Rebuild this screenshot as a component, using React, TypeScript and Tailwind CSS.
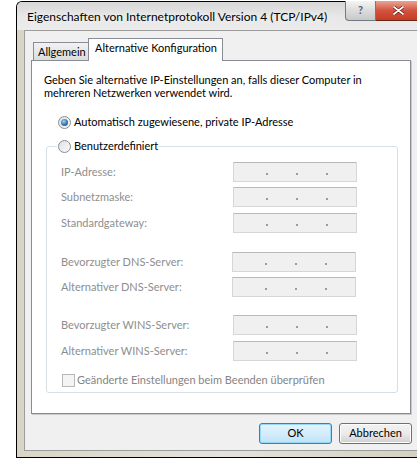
import React from 'react';

const font = { fontFamily: 'Lato, "Open Sans", sans-serif' };

type Field = { label: string; mt: string; shift?: boolean };

const fields: Field[] = [
  { label: 'IP-Adresse:', mt: 'mt-[9px]' },
  { label: 'Subnetzmaske:', mt: 'mt-[5px]' },
  { label: 'Standardgateway:', mt: 'mt-[6px]' },
  { label: 'Bevorzugter DNS-Server:', mt: 'mt-[19px]', shift: true },
  { label: 'Alternativer DNS-Server:', mt: 'mt-[5px]', shift: true },
  { label: 'Bevorzugter WINS-Server:', mt: 'mt-[18px]' },
  { label: 'Alternativer WINS-Server:', mt: 'mt-[6px]' },
];

function IpBox({ shift }: { shift?: boolean }) {
  return (
    <div
      className={`${shift ? '-ml-[1px]' : ''} w-[124px] h-[20px] bg-[#f0f0f0] border border-[#d6d6d6] border-t-[#b9b9b9] rounded-[1px] flex items-start pt-[10px] pl-[32px] gap-[28px]`}
    >
      <span className="w-[2px] h-[2px] bg-[#9a9aa8]" />
      <span className="w-[2px] h-[2px] bg-[#9a9aa8]" />
      <span className="w-[2px] h-[2px] bg-[#9a9aa8]" />
    </div>
  );
}

function Radio({ checked }: { checked?: boolean }) {
  return (
    <span className="w-[13px] h-[13px] rounded-full border border-[#8a8d90] bg-gradient-to-br from-[#e0e0e0] to-[#fbfbfb] flex items-center justify-center shrink-0">
      {checked && (
        <span className="w-[7px] h-[7px] rounded-full bg-[radial-gradient(circle_at_40%_35%,#9fd4f4,#2a6ca6_60%,#1d4e7e)]" />
      )}
    </span>
  );
}

function Button({ label, primary }: { label: string; primary?: boolean }) {
  return (
    <div
      className={`w-[73px] h-[21px] rounded-[3px] border flex items-center justify-center text-[11px] text-black ${
        primary
          ? 'border-[#3c7fb1] bg-gradient-to-b from-[#e5f4fc] via-[#d4edfb] to-[#bde3f8] shadow-[inset_0_0_0_1px_#9ad8f7]'
          : 'border-[#707070] bg-gradient-to-b from-[#f2f2f2] via-[#ebebeb] to-[#d0d0d0] shadow-[inset_0_0_0_1px_#fcfcfc]'
      }`}
    >
      {label}
    </div>
  );
}

export default function App() {
  return (
    <div className="w-[417px] h-[459px] bg-white overflow-hidden flex" style={font}>
      {/* window */}
      <div className="ml-[16px] mt-[1px] w-[412px] h-[457px] shrink-0 border-l border-t border-b border-black rounded-tl-[6px] bg-gradient-to-r from-[#d9d5c6] via-[#e4e2dc] to-[#d4d0c0] flex flex-col">
        {/* title bar */}
        <div className="h-[28px] flex items-start bg-gradient-to-b from-[#d6d6d6] via-[#e7e7e7] to-[#ececec] rounded-tl-[5px]">
          <div className="pl-[10px] pt-[7px] text-[12px] leading-[15px] whitespace-nowrap text-black [text-shadow:0_0_6px_#ffffff]">
            Eigenschaften von Internetprotokoll Version 4 (TCP/IPv4)
          </div>
          <div className="ml-auto -mt-[1px] flex mr-[7px]">
            <div className="w-[31px] h-[20px] rounded-bl-[4px] border border-t-0 border-[#707a84] bg-gradient-to-b from-[#f4f4f4] via-[#dcdcdc] to-[#c8c8c8] flex items-center justify-center text-[11px] font-bold text-[#58606a]">
              ?
            </div>
            <div className="w-[45px] h-[20px] rounded-br-[4px] border border-t-0 border-l-0 border-[#6b2418] bg-gradient-to-b from-[#e8a493] via-[#d2533f] to-[#c63b24] flex items-center justify-center">
              <svg width="11" height="9" viewBox="0 0 11 9">
                <path d="M1 1 L10 8 M10 1 L1 8" stroke="#5a1208" strokeWidth="3.2" strokeLinecap="round" />
                <path d="M1 1 L10 8 M10 1 L1 8" stroke="#ffffff" strokeWidth="1.8" strokeLinecap="round" />
              </svg>
            </div>
          </div>
        </div>

        {/* client area */}
        <div className="mx-[7px] h-[421px] bg-[#f0f0f0] border border-[#9c9c9c] flex flex-col">
          {/* tabs */}
          <div className="mt-[7px] ml-[8px] h-[22px] flex items-end whitespace-nowrap">
            <div className="w-[56px] h-[18px] border border-b-0 border-[#898c95] bg-gradient-to-b from-[#f2f2f2] to-[#dcdcdc] text-[11px] leading-[17px] pl-[4px] text-black">
              Allgemein
            </div>
            <div className="relative z-10 -ml-[1px] -mb-[1px] w-[135px] h-[23px] border border-b-0 border-[#898c95] bg-white text-[11px] leading-[18px] pl-[6px] text-black">
              Alternative Konfiguration
            </div>
          </div>

          {/* tab page */}
          <div className="ml-[6px] w-[380px] h-[354px] bg-white border border-[#898c95] shadow-[1px_1px_0_#c9c9c9] flex flex-col">
            <p className="mt-[12px] ml-[12px] text-[11px] leading-[13px] whitespace-nowrap text-black">
              Geben Sie alternative IP-Einstellungen an, falls dieser Computer in
              <br />
              mehreren Netzwerken verwendet wird.
            </p>

            <div className="mt-[17px] ml-[26px] h-[13px] flex items-center gap-[3px] text-[11px] text-black">
              <Radio checked />
              <span>Automatisch zugewiesene, private IP-Adresse</span>
            </div>

            <fieldset className="mt-[11px] ml-[14px] w-[352px] px-[10px] pb-[5px] border border-[#d5dfe5] rounded-[3px]">
              <legend className="px-[1px] h-[13px] flex items-center gap-[3px] text-[11px] text-black">
                <Radio />
                <span>Benutzerdefiniert</span>
              </legend>

              {fields.map((f) => (
                <div key={f.label} className={`${f.mt} ml-[4px] flex items-center`}>
                  <span className="w-[172px] text-[11px] text-[#8e8e8e]">{f.label}</span>
                  <IpBox shift={f.shift} />
                </div>
              ))}

              <div className="mt-[13px] ml-[5px] h-[13px] flex items-center gap-[2px] text-[11px] text-[#858585]">
                <span className="w-[13px] h-[13px] border border-[#b8b8b8] bg-[#f4f4f4] shrink-0" />
                <span>Geänderte Einstellungen beim Beenden überprüfen</span>
              </div>
            </fieldset>
          </div>

          {/* dialog buttons */}
          <div className="mt-[9px] ml-[6px] w-[381px] flex justify-end gap-[7px]">
            <Button label="OK" primary />
            <Button label="Abbrechen" />
          </div>
        </div>
      </div>
    </div>
  );
}
